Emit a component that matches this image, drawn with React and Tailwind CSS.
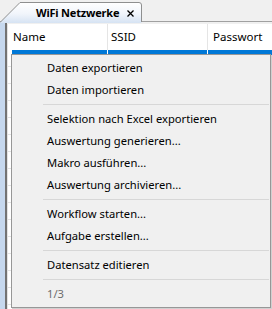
import React from "react";

const items = [
  { label: "Daten exportieren" },
  { label: "Daten importieren" },
  { sep: true },
  { label: "Selektion nach Excel exportieren" },
  { label: "Auswertung generieren..." },
  { label: "Makro ausführen..." },
  { label: "Auswertung archivieren..." },
  { sep: true },
  { label: "Workflow starten..." },
  { label: "Aufgabe erstellen..." },
  { sep: true },
  { label: "Datensatz editieren" },
  { sep: true },
  { label: "1/3", disabled: true },
];

const TabShape = () => (
  <svg className="absolute inset-0" width="143" height="23" viewBox="0 0 143 23">
    <defs>
      <linearGradient id="tabfill" x1="0" y1="0" x2="0" y2="1">
        <stop offset="0" stopColor="#ffffff" />
        <stop offset="0.55" stopColor="#f1f5fb" />
        <stop offset="1" stopColor="#d6e3f3" />
      </linearGradient>
    </defs>
    <path
      d="M0 22.5 L20 2.5 L139 2.5 Q141.5 2.5 141.5 5 L141.5 23 L0 23 Z"
      fill="url(#tabfill)"
    />
    <path
      d="M0 22.5 L20 2.5 L139 2.5 Q141.5 2.5 141.5 5 L141.5 22"
      fill="none"
      stroke="#8e8f8f"
      strokeWidth="1"
    />
    {/* close cross */}
    <path d="M127.5 10.5 L133.5 16.5 M133.5 10.5 L127.5 16.5" stroke="#000" strokeWidth="1.3" />
  </svg>
);

const App = () => {
  return (
    <div
      className="relative w-[272px] h-[309px] overflow-hidden bg-[#f0f0f0] text-black"
      style={{ fontFamily: '"Noto Sans", "Open Sans", sans-serif' }}
    >
      {/* tab strip */}
      <div className="flex h-[22px] border-b border-[#a0a0a0]">
        <div className="relative w-[143px] h-[23px] shrink-0 z-10">
          <TabShape />
          <div className="relative flex items-center h-[22px] pt-[3px] pl-[36px] whitespace-nowrap">
            <span className="font-bold text-[11px] leading-none tracking-[-0.2px]">WiFi Netzwerke</span>
          </div>
        </div>
      </div>

      {/* tab content */}
      <div className="flex h-[287px] bg-[#c6d8ee]">
        <div className="w-[5px] shrink-0" />
        <div className="flex-1 flex flex-col overflow-hidden border-l-2 border-[#737373] bg-white">
          <div className="h-[2px] shrink-0 bg-[#f0f0f0]" />
          {/* header */}
          <div className="flex shrink-0 h-[26px] text-[11.5px] border-l border-[#e3e3e3]">
            <div className="w-[4px]" />
            <div className="w-[96px] flex items-center pl-[1px] border-r border-[#e5e5e5]">Name</div>
            <div className="w-[100px] flex items-center pl-[3px] border-r border-[#e5e5e5]">SSID</div>
            <div className="flex-1 flex items-center pl-[5px]">Passwort</div>
          </div>
          {/* rows */}
          <div className="flex flex-col shrink-0 border-l border-[#e3e3e3]">
            <div className="flex h-[17px] border-b border-[#e3e3e3]">
              <div className="w-[4px] bg-white" />
              <div className="w-[96px] bg-[#0078d7] border-r border-white" />
              <div className="w-[100px] bg-[#0078d7] border-r border-white" />
              <div className="flex-1 bg-[#0078d7]" />
            </div>
            {Array.from({ length: 15 }).map((_, i) => (
              <div key={i} className="h-[17px] border-b border-[#e3e3e3]" />
            ))}
          </div>
        </div>
      </div>

      {/* context menu */}
      <div className="absolute left-[11px] top-[54px] w-[260px] h-[254px] border border-[#979797] bg-[#f0f0f0] shadow-[1px_1px_0_#d0d0d0] pt-[2px] text-[11.2px]">
        {items.map((it, i) =>
          it.sep ? (
            <div key={i} className="h-[7px] flex items-center pl-[31px] pr-[1px]">
              <div className="h-px w-full bg-[#d7d7d7]" />
            </div>
          ) : (
            <div
              key={i}
              className={`h-[22px] flex items-center pl-[35px] ${it.disabled ? "text-[#6d6d6d]" : "text-black"}`}
            >
              {it.label}
            </div>
          )
        )}
      </div>
    </div>
  );
};

export default App;
